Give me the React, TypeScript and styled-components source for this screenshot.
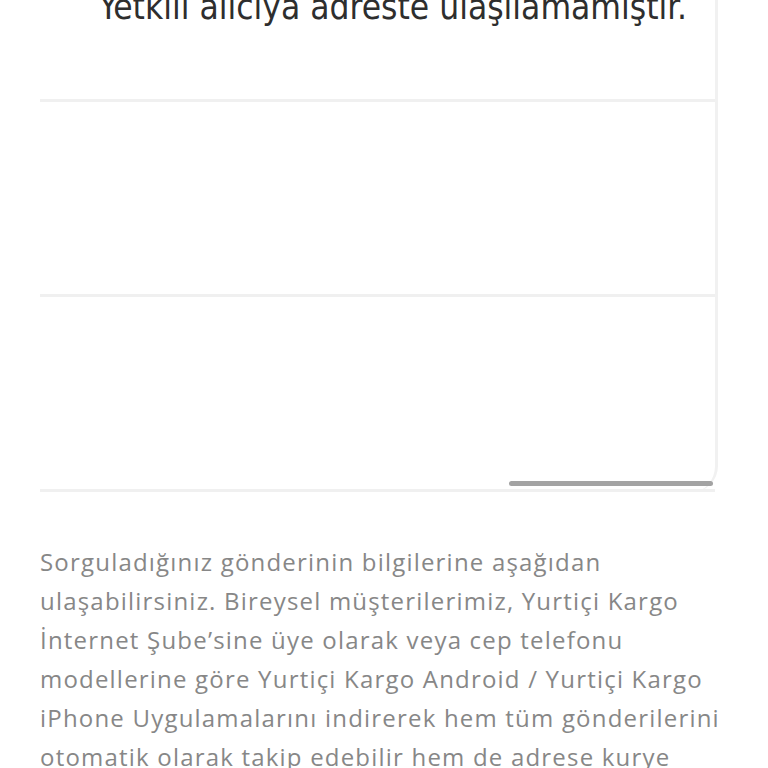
import { createGlobalStyle, styled } from "styled-components";

const GlobalStyle = createGlobalStyle`
  html, body {
    margin: 0;
    padding: 0;
    background: #ffffff;
  }
  body {
    font-family: "Open Sans", "Noto Sans", sans-serif;
    overflow: hidden;
  }
`;

const rows = [
  { status: "Yetkili alıcıya adreste ulaşılamamıştır." },
  { status: "" },
  { status: "" },
];

const infoLines = [
  "Sorguladığınız gönderinin bilgilerine aşağıdan",
  "ulaşabilirsiniz. Bireysel müşterilerimiz, Yurtiçi Kargo",
  "İnternet Şube’sine üye olarak veya cep telefonu",
  "modellerine göre Yurtiçi Kargo Android / Yurtiçi Kargo",
  "iPhone Uygulamalarını indirerek hem tüm gönderilerini",
  "otomatik olarak takip edebilir hem de adrese kurye",
];

export default function App() {
  return (
    <>
      <GlobalStyle />
      <Page>
        <TrackingCard>
          {rows.map((row, index) => (
            <TrackingRow key={`row-${index}`}>
              {row.status && <StatusText>{row.status}</StatusText>}
            </TrackingRow>
          ))}
          <ScrollThumb />
        </TrackingCard>
        <InfoText>
          {infoLines.map((line, index) => (
            <span key={`line-${index}`}>
              {line}
              <br />
            </span>
          ))}
        </InfoText>
      </Page>
    </>
  );
}

const Page = styled.div`
  width: 768px;
  height: 768px;
  overflow: hidden;
  display: flex;
  flex-direction: column;
`;

const TrackingCard = styled.div`
  position: relative;
  margin: -93px 50px 0 40px;
  border-right: 3px solid #f1f1f1;
  border-bottom-right-radius: 26px;
  display: flex;
  flex-direction: column;
`;

const TrackingRow = styled.div`
  height: 192px;
  border-bottom: 3px solid #f0f0f0;
  display: flex;
  align-items: flex-end;
  justify-content: flex-end;
  padding-right: 28px;

  &:last-of-type {
    border-bottom-right-radius: 26px;
  }
`;

const StatusText = styled.div`
  font-family: "Ubuntu Condensed", "Liberation Sans Narrow", "DejaVu Sans Condensed", "Roboto Condensed", sans-serif;
  font-stretch: condensed;
  font-size: 35px;
  line-height: 40px;
  color: #2e2e2e;
  margin-bottom: 72px;
  white-space: nowrap;
`;

const ScrollThumb = styled.div`
  position: absolute;
  right: 2px;
  bottom: 6px;
  width: 204px;
  height: 5px;
  border-radius: 3px;
  background: #a3a3a3;
`;

const InfoText = styled.p`
  margin: 50px 0 0 40px;
  font-family: "Open Sans", "Noto Sans", sans-serif;
  font-size: 24px;
  line-height: 39px;
  letter-spacing: 1.2px;
  color: #878787;
  white-space: nowrap;
`;
